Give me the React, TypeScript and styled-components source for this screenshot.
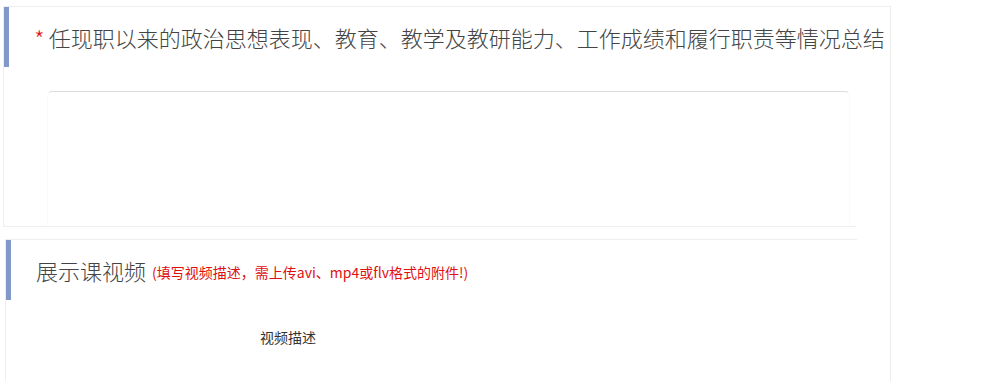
import styled, { createGlobalStyle } from 'styled-components';

const GlobalStyle = createGlobalStyle`
  html, body {
    margin: 0;
    padding: 0;
    background: #fff;
    font-family: "Microsoft YaHei", "Noto Sans CJK SC", "Liberation Sans", sans-serif;
    color: #333;
  }
`;

const Page = styled.div`
  padding: 6px 0 0 3px;
  height: 375px;
  overflow: hidden;
`;

const Board = styled.div`
  width: 887px;
  height: 100%;
  border-right: 1px solid #ececec;
  display: flex;
  flex-direction: column;
`;

const Card = styled.section<{ $shift?: number; $width?: number }>`
  flex-shrink: 0;
  margin-left: ${p => p.$shift ?? 0}px;
  width: ${p => (p.$width ? `${p.$width}px` : 'auto')};
  border-top: 1px solid #eeeeee;
  border-left: 1px solid #eeeeee;
  display: flex;
  flex-direction: column;
`;

const Header = styled.div`
  height: 60px;
  flex-shrink: 0;
  display: flex;
  align-items: center;
  gap: 6px;
  padding-left: 25px;
  border-left: 5px solid #8198c8;
`;

const Title = styled.h2`
  margin: 0;
  font-size: 22px;
  font-weight: 300;
  color: #444;
  white-space: nowrap;
  display: flex;
  align-items: center;
`;

const Star = styled.span`
  color: #e01818;
  font-size: 24px;
  line-height: 1;
  margin: 4px 4px 0 0;
`;

const Note = styled.span`
  color: #e01010;
  font-size: 14px;
  font-weight: 400;
  margin-top: 4px;
  white-space: nowrap;
`;

const Body = styled.div`
  height: 160px;
  flex-shrink: 0;
  margin-right: 34px;
  border-bottom: 1px solid #eeeeee;
  padding: 24px 0 0 43px;
  box-sizing: border-box;
  overflow: hidden;
`;

const TextBox = styled.div`
  width: 801px;
  height: 160px;
  border: 1px solid #fafafa;
  border-top-color: #dcdcdc;
  border-radius: 5px 5px 0 0;
`;

const Gap = styled.div`
  height: 12px;
  flex-shrink: 0;
`;

const Row = styled.div`
  display: flex;
  padding: 28px 0 0 254px;
  height: 80px;
`;

const Label = styled.span`
  font-size: 14px;
  font-weight: 400;
  color: #333;
  line-height: 18px;
`;

export default function App() {
  return (
    <>
      <GlobalStyle />
      <Page>
        <Board>
          <Card>
            <Header>
              <Title>
                <Star>*</Star>
                任现职以来的政治思想表现、教育、教学及教研能力、工作成绩和履行职责等情况总结
              </Title>
            </Header>
            <Body>
              <TextBox />
            </Body>
          </Card>
          <Gap />
          <Card $shift={2} $width={851}>
            <Header>
              <Title>展示课视频</Title>
              <Note>(填写视频描述，需上传avi、mp4或flv格式的附件!)</Note>
            </Header>
            <Row>
              <Label>视频描述</Label>
            </Row>
          </Card>
        </Board>
      </Page>
    </>
  );
}
